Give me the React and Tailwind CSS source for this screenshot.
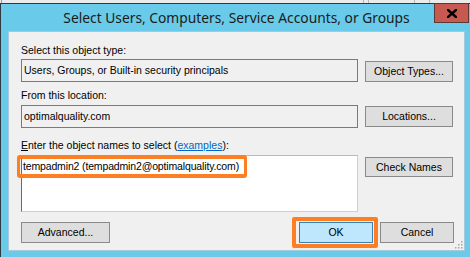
import React from 'react'

const dlg = { fontFamily: '"Liberation Sans", Arial, sans-serif' }

function Btn({ children, className = '' }) {
  return (
    <div
      className={`flex items-center justify-center border border-[#8a8a8a] bg-[#dedede] text-[10.5px] text-black leading-none ${className}`}
    >
      {children}
    </div>
  )
}

function Field({ children }) {
  return (
    <div className="flex h-[23px] w-[337px] items-center border border-[#7a7a7a] bg-[#f0f0f0] pl-[2px] text-[10.5px] text-black">
      {children}
    </div>
  )
}

export default function App() {
  return (
    <div className="relative h-[257px] w-[470px] overflow-hidden bg-[#ebebeb]" style={dlg}>
      {/* strip of the window behind */}
      <div className="flex h-[3px]">
        <div className="ml-[1px] w-px bg-[#9a9a9a]" />
        <div className="ml-[361px] w-px bg-[#b5b5b5]" />
        <div className="ml-[4px] w-px bg-[#b5b5b5]" />
        <div className="ml-[45px] w-px bg-[#b5b5b5]" />
        <div className="ml-[14px] w-px bg-[#b5b5b5]" />
      </div>

      <div className="flex h-[254px] flex-col border-l border-t border-[#2e3a40] bg-[#69cbe9]">
        {/* title bar */}
        <div className="grid h-[27px] grid-cols-[1fr_auto_1fr]">
          <div />
          <div
            className="pl-[2px] pt-[5px] text-[13.8px] leading-[18px] text-[#1b1b1b]"
            style={{ fontFamily: '"Noto Sans", "Open Sans", sans-serif' }}
          >
            Select Users, Computers, Service Accounts, or Groups
          </div>
          <div className="flex justify-end">
            <div className="mr-[1px] mt-[-1px] flex h-[20px] w-[35px] items-center justify-center border border-[#5a3a36] bg-[#c75a50]">
              <svg width="10" height="9" viewBox="0 0 10 9">
                <path d="M1 1 L9 8 M9 1 L1 8" stroke="#000" strokeWidth="2.4" strokeLinecap="square" />
              </svg>
            </div>
          </div>
        </div>

        {/* client area */}
        <div className="relative ml-[7px] h-[220px] w-[457px] border border-[#a6cadb] bg-[#f0f0f0] pl-[12px] pt-[12px]">
          <div className="h-[13px] text-[10.5px] leading-[13px] text-black">Select this object type:</div>
          <div className="mt-[2px] flex gap-[7px]">
            <Field>Users, Groups, or Built-in security principals</Field>
            <Btn className="mt-[2px] h-[21px] w-[88px]">Object Types...</Btn>
          </div>

          <div className="mt-[7px] h-[13px] text-[10.5px] leading-[13px] text-black">From this location:</div>
          <div className="mt-[3px] flex gap-[7px]">
            <Field>optimalquality.com</Field>
            <Btn className="mt-[1px] h-[21px] w-[88px]">Locations...</Btn>
          </div>

          <div className="mt-[11px] h-[13px] text-[10.5px] leading-[13px] text-black">
            <span className="underline">E</span>nter the object names to select (
            <span className="text-[#0066cc] underline">examples</span>):
          </div>
          <div className="mt-[3px] flex gap-[7px]">
            <div className="h-[57px] w-[337px] border border-[#cfcfcf] border-l-[#6a6a6a] border-t-[#b9b9b9] bg-white pl-[1px] pt-[4px] text-[10.5px] leading-[13px] tracking-[-0.15px] text-black">
              tempadmin2 (tempadmin2@optimalquality.com)
            </div>
            <Btn className="mt-[2px] h-[20px] w-[88px]">Check Names</Btn>
          </div>

          <div className="mt-[10px] flex h-[21px] w-[433px]">
            <Btn className="h-[21px] w-[89px]">Advanced...</Btn>
            <div className="flex-1" />
            <div className="flex h-[21px] w-[74px] items-center justify-center border border-[#3c7fb1] bg-[#bee6fd] text-[10.5px] leading-none text-black">
              OK
            </div>
            <Btn className="ml-[7px] h-[21px] w-[74px]">Cancel</Btn>
          </div>

          {/* resize grip */}
          <svg className="absolute bottom-[1px] right-[1px]" width="9" height="9" viewBox="0 0 9 9">
            {[
              [7, 1], [7, 4], [4, 4], [7, 7], [4, 7], [1, 7],
            ].map(([x, y]) => (
              <rect key={`${x}-${y}`} x={x} y={y} width="1.5" height="1.5" fill="#a8a8a8" />
            ))}
          </svg>

          {/* orange annotations */}
          <div className="absolute left-[8px] top-[123px] h-[23px] w-[230px] rounded-[3px] border-[4px] border-x-[3.5px] border-[#fd7e23]" />
          <div className="absolute left-[283px] top-[185px] h-[31px] w-[86px] rounded-[2px] border-[4px] border-[#fd7e23]" />
        </div>
      </div>
    </div>
  )
}
